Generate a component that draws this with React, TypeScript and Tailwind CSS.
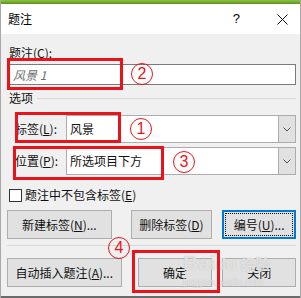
import React from 'react';

const font = { fontFamily: '"Noto Sans CJK SC", "Liberation Sans", sans-serif' };

function Btn({ children, className = '' }: { children: React.ReactNode; className?: string }) {
  return (
    <div className={`h-[29px] flex items-center justify-center bg-[#e1e1e1] border border-[#adadad] text-[12px] text-[#111] ${className}`}>
      {children}
    </div>
  );
}

function Combo({ label, value }: { label: React.ReactNode; value: string }) {
  return (
    <div className="flex items-center h-[28px]">
      <div className="w-[59px] pl-[8px] text-[12px] text-[#111]">{label}</div>
      <div className="flex-1 h-full flex bg-white border border-[#adadad]">
        <div className="flex-1 flex items-center pl-[3px] text-[12px] text-[#111]">{value}</div>
        <div className="w-[17px] h-full bg-[#e1e1e1] border-l border-[#adadad] flex items-center justify-center">
          <svg width="8" height="5" viewBox="0 0 8 5">
            <path d="M0.5 0.5 L4 4 L7.5 0.5" fill="none" stroke="#555" strokeWidth="1" />
          </svg>
        </div>
      </div>
    </div>
  );
}

function Circled({ n, x, y }: { n: string; x: number; y: number }) {
  return (
    <div
      className="absolute w-[22px] h-[22px] rounded-full border-[1.5px] border-[#e8141c] flex items-center justify-center text-[#e8141c] text-[16px] leading-none"
      style={{ left: x - 11, top: y - 11, fontFamily: '"Liberation Sans", sans-serif' }}
    >
      {n}
    </div>
  );
}

export default function App() {
  return (
    <div className="relative w-[301px] h-[298px] overflow-hidden bg-[#f0f0f0] border-l border-r border-[#a8a8a8]" style={font}>
      <div className="h-[4px] bg-gradient-to-b from-[#8cc63f] to-[#5f8f1f]" />
      <div className="h-[30px] bg-white flex items-center pl-[7px] pr-[12px]">
        <span className="text-[12px] text-black flex-1">题注</span>
        <span className="text-[13px] text-black mr-[37px]" style={{ fontFamily: '"Liberation Sans", sans-serif' }}>?</span>
        <svg width="11" height="11" viewBox="0 0 11 11">
          <path d="M0.5 0.5 L10.5 10.5 M10.5 0.5 L0.5 10.5" stroke="#111" strokeWidth="1" />
        </svg>
      </div>

      <div className="pl-[6px] pr-[4px]">
        <div className="mt-[12px] h-[14px] leading-[14px] text-[12px] text-[#111] pl-[2px]">
          题注(<u>C</u>):
        </div>
        <div className="mt-[4px] h-[21px] bg-white border border-[#7a7a7a] flex items-center pl-[5px] text-[12px] italic text-[#6d6d6d]">
          风景 1
        </div>
        <div className="mt-[6px] h-[14px] flex items-center">
          <span className="text-[12px] leading-[14px] text-[#111] pl-[2px]">选项</span>
          <div className="flex-1 h-px bg-[#d8d8d8] ml-[4px]" />
        </div>
        <div className="mt-[10px] flex flex-col gap-[4px]">
          <Combo label={<>标签(<u>L</u>):</>} value="风景" />
          <Combo label={<>位置(<u>P</u>):</>} value="所选项目下方" />
        </div>
        <div className="mt-[13px] h-[14px] flex items-center pl-[2px]">
          <div className="w-[13px] h-[13px] bg-white border border-[#333]" />
          <span className="ml-[3px] text-[12px] text-[#111]">题注中不包含标签(<u>E</u>)</span>
        </div>
        <div className="mt-[8px] flex">
          <Btn className="w-[105px]">新建标签(<u>N</u>)...</Btn>
          <Btn className="w-[82px] ml-[19px]">删除标签(<u>D</u>)</Btn>
          <div className="w-[74px] ml-[10px] h-[29px] border-2 border-[#0078d7] bg-[#e1e1e1] p-[1px]">
            <div className="w-full h-full border border-dotted border-[#111] flex items-center justify-center text-[12px] text-[#111]">
              编号(<u>U</u>)...
            </div>
          </div>
        </div>
        <div className="mt-[6px] h-px bg-[#d8d8d8]" />
        <div className="mt-[12px] flex">
          <Btn className="w-[115px]">自动插入题注(<u>A</u>)...</Btn>
          <Btn className="w-[75px] ml-[16px]">确定</Btn>
          <Btn className="w-[74px] ml-[10px]">关闭</Btn>
        </div>
      </div>
      <div className="absolute left-0 right-0 bottom-0 h-[2px] bg-[#6b6b6b]" />

      {/* watermark */}
      <div className="absolute left-[182px] top-[252px] pointer-events-none text-white/60" style={{ textShadow: '0 0 1px #b0b0b0' }}>
        <div className="text-[21px] font-bold leading-none" style={{ fontFamily: '"Liberation Sans", sans-serif' }}>Bai<span className="text-[17px]">du</span><span className="text-[15px] ml-[4px]" style={font}>经验</span></div>
        <div className="text-[10px] leading-none mt-[5px]" style={{ fontFamily: '"Liberation Sans", sans-serif' }}>jingyan.baidu.com</div>
      </div>

      {/* annotations */}
      <div className="absolute left-[6px] top-[58px] w-[116px] h-[32px] border-[3px] border-[#e8141c]" />
      <div className="absolute left-[14px] top-[112px] w-[106px] h-[31px] border-[3px] border-[#e8141c]" />
      <div className="absolute left-[12px] top-[146px] w-[151px] h-[34px] border-[3px] border-[#e8141c]" />
      <div className="absolute left-[131px] top-[250px] w-[88px] h-[43px] border-[3px] border-[#e8141c]" />
      <Circled n="2" x={141} y={74} />
      <Circled n="1" x={140} y={129} />
      <Circled n="3" x={183} y={162} />
      <Circled n="4" x={118} y={248} />
    </div>
  );
}
